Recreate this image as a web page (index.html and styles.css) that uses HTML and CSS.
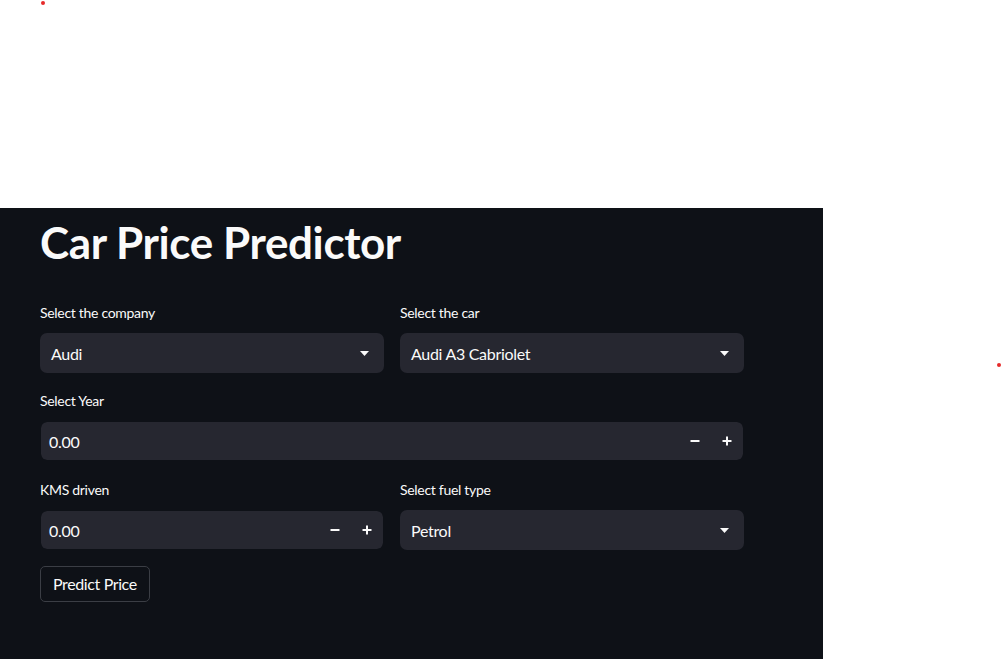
FILE: index.html
```html
<!DOCTYPE html>
<html lang="en">
<head>
<meta charset="utf-8">
<title>Car Price Predictor</title>
<link rel="stylesheet" href="styles.css">
</head>
<body>
<span class="dot dot-a"></span>
<span class="dot dot-b"></span>
<div class="spacer"></div>
<main class="panel">
  <h1 class="title">Car Price Predictor</h1>
  <div class="form">
    <div class="row">
      <div class="field">
        <label class="label">Select the company</label>
        <div class="select"><span>Audi</span><svg class="caret" width="9" height="5" viewBox="0 0 9 5"><path d="M0 0h9L4.5 5z" fill="#fafafa"/></svg></div>
      </div>
      <div class="field">
        <label class="label">Select the car</label>
        <div class="select"><span>Audi A3 Cabriolet</span><svg class="caret" width="9" height="5" viewBox="0 0 9 5"><path d="M0 0h9L4.5 5z" fill="#fafafa"/></svg></div>
      </div>
    </div>
    <div class="field">
      <label class="label">Select Year</label>
      <div class="number">
        <span class="value">0.00</span>
        <span class="step"><svg width="10" height="10" viewBox="0 0 10 10"><path d="M0.5 5h9" stroke="#fafafa" stroke-width="2"/></svg></span>
        <span class="step"><svg width="10" height="10" viewBox="0 0 10 10"><path d="M0.5 5h9M5 0.5v9" stroke="#fafafa" stroke-width="2"/></svg></span>
      </div>
    </div>
    <div class="row row-last">
      <div class="field">
        <label class="label">KMS driven</label>
        <div class="number">
          <span class="value">0.00</span>
          <span class="step"><svg width="10" height="10" viewBox="0 0 10 10"><path d="M0.5 5h9" stroke="#fafafa" stroke-width="2"/></svg></span>
          <span class="step"><svg width="10" height="10" viewBox="0 0 10 10"><path d="M0.5 5h9M5 0.5v9" stroke="#fafafa" stroke-width="2"/></svg></span>
        </div>
      </div>
      <div class="field">
        <label class="label">Select fuel type</label>
        <div class="select"><span>Petrol</span><svg class="caret" width="9" height="5" viewBox="0 0 9 5"><path d="M0 0h9L4.5 5z" fill="#fafafa"/></svg></div>
      </div>
    </div>
    <div><button class="btn">Predict Price</button></div>
  </div>
</main>
</body>
</html>
```
FILE: styles.css
```css
html, body {
  margin: 0;
  padding: 0;
  background: #ffffff;
  font-family: "Lato", "Noto Sans", sans-serif;
  height: 659px;
  overflow: hidden;
}
.dot {
  position: absolute;
  width: 4px;
  height: 4px;
  border-radius: 50%;
  background: #e62a2a;
}
.dot-a { left: 41px; top: 1px; }
.dot-b { left: 997px; top: 363px; }
.spacer { height: 208px; }
.panel {
  width: 823px;
  height: 451px;
  box-sizing: border-box;
  background: #0e1117;
  color: #fafafa;
  padding: 8px 79px 0 40px;
}
.title {
  margin: 0 0 33px 0;
  font-size: 44px;
  font-weight: 700;
  line-height: 52px;
  letter-spacing: -0.4px;
}
.form {
  display: flex;
  flex-direction: column;
  gap: 16px;
}
.row {
  display: grid;
  grid-template-columns: 1fr 1fr;
  gap: 16px;
}
.row-last { margin-top: 1px; }
.field {
  display: flex;
  flex-direction: column;
}
.label {
  height: 24px;
  box-sizing: border-box;
  padding-bottom: 2px;
  display: flex;
  align-items: center;
  font-size: 14px;
  letter-spacing: -0.3px;
  margin-bottom: 8px;
}
.select {
  height: 40px;
  box-sizing: border-box;
  background: #262730;
  border-radius: 7px;
  display: flex;
  align-items: center;
  justify-content: space-between;
  padding: 0 15px 0 11px;
  font-size: 16px;
  letter-spacing: -0.3px;
}
.caret { display: block; }
.number {
  height: 40px;
  box-sizing: border-box;
  border: 1px solid #0e1117;
  background: #262730;
  background-clip: padding-box;
  border-radius: 7px;
  display: flex;
  align-items: center;
  font-size: 16px;
  letter-spacing: -0.3px;
}
.value {
  flex: 1;
  padding-left: 8px;
}
.step {
  width: 32px;
  height: 100%;
  display: flex;
  align-items: center;
  justify-content: center;
}
.step svg { display: block; }
.btn {
  height: 36px;
  box-sizing: border-box;
  padding: 0 12px 2px 12px;
  background: #0e1117;
  color: #fafafa;
  border: 1px solid #3b3e45;
  border-radius: 5px;
  font-family: inherit;
  font-size: 16px;
  letter-spacing: -0.38px;
}
```
